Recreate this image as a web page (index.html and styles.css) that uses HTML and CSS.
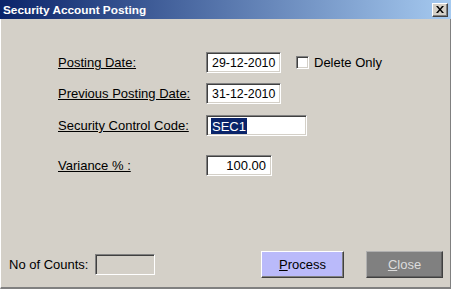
FILE: index.html
```html
<!DOCTYPE html>
<html lang="en">
<head>
    <meta charset="UTF-8">
    <title>Security Account Posting</title>
    <link rel="stylesheet" href="styles.css">
</head>
<body>
    <div class="window">
        <!-- Caption bar -->
        <div class="titlebar">
            <span class="title">Security Account Posting</span>
            <div class="caption-btn">
                <svg width="8" height="7" viewBox="0 0 8 7">
                    <path d="M0 0h2l2 2.5L6 0h2L5 3.5 8 7H6L4 4.5 2 7H0l3-3.5z" fill="#000"/>
                </svg>
            </div>
        </div>

        <div class="content">
            <div class="form">
                <div class="row">
                    <span class="field-label">Posting Date:</span>
                    <span class="textbox date">29-12-2010</span>
                    <span class="checkbox"></span>
                    <span class="check-label">Delete Only</span>
                </div>
                <div class="row">
                    <span class="field-label">Previous Posting Date:</span>
                    <span class="textbox date">31-12-2010</span>
                </div>
                <div class="row row-code">
                    <span class="field-label">Security Control Code:</span>
                    <span class="textbox code"><span class="selected">SEC1</span></span>
                </div>
                <div class="row row-variance">
                    <span class="field-label">Variance % :</span>
                    <span class="textbox number">100.00</span>
                </div>
            </div>

            <div class="footer">
                <span class="count-label">No of Counts:</span>
                <span class="textbox disabled"></span>
                <div class="buttons">
                    <div class="btn btn-process"><u>P</u>rocess</div>
                    <div class="btn btn-close"><u>C</u>lose</div>
                </div>
            </div>
        </div>
    </div>
</body>
</html>
```

FILE: styles.css
```css
body {
    margin: 0;
    font-family: 'Liberation Sans', Arial, sans-serif;
    font-size: 13px;
    color: #000;
    background: #d4d0c8;
}

.window {
    width: 451px;
    height: 289px;
    display: flex;
    flex-direction: column;
    background: #d4d0c8;
    box-sizing: border-box;
}

.titlebar {
    height: 19px;
    display: flex;
    align-items: center;
    justify-content: space-between;
    padding: 0 3px 0 3px;
    background: linear-gradient(90deg, #0a246a, #a6caf0);
}

.title {
    color: #fff;
    font-weight: bold;
    font-size: 11.8px;
}

.caption-btn {
    width: 16px;
    height: 14px;
    box-sizing: border-box;
    display: flex;
    align-items: center;
    justify-content: center;
    background: #d4d0c8;
    border-top: 1px solid #fff;
    border-left: 1px solid #fff;
    border-right: 1px solid #404040;
    border-bottom: 1px solid #404040;
    box-shadow: inset -1px -1px #808080;
}

.content {
    flex: 1;
    display: flex;
    flex-direction: column;
    border-left: 1px solid #fff;
    border-right: 1px solid #808080;
    border-bottom: 2px solid #808080;
    box-shadow: inset 1px 0 #d4d0c8, 1px 0 #404040;
}

.form {
    display: flex;
    flex-direction: column;
    padding: 33px 0 0 57px;
}

.row {
    display: flex;
    align-items: center;
    height: 21px;
    margin-bottom: 10px;
}

.row-code {
    margin-top: 1px;
}

.row-variance {
    margin-top: 9px;
}

.field-label {
    width: 148px;
    flex-shrink: 0;
    text-decoration: underline;
}

.textbox {
    height: 21px;
    flex-shrink: 0;
    box-sizing: border-box;
    display: flex;
    align-items: center;
    padding: 0 5px;
    white-space: nowrap;
    background: #fff;
    border-top: 1px solid #808080;
    border-left: 1px solid #808080;
    border-right: 1px solid #fff;
    border-bottom: 1px solid #fff;
    box-shadow: inset 1px 1px #404040, inset -1px -1px #d4d0c8;
}

.date {
    width: 75px;
    padding: 0 0 0 5px;
    font-size: 12.4px;
}

.code {
    width: 101px;
    padding-left: 4px;
}

.selected {
    background: #0a246a;
    color: #fff;
    padding: 1px 1px 0 1px;
}

.number {
    width: 66px;
    justify-content: flex-end;
}

.checkbox {
    width: 13px;
    height: 13px;
    margin-left: 15px;
    box-sizing: border-box;
    background: #fff;
    border-top: 1px solid #808080;
    border-left: 1px solid #808080;
    border-right: 1px solid #fff;
    border-bottom: 1px solid #fff;
    box-shadow: inset 1px 1px #404040, inset -1px -1px #d4d0c8;
}

.check-label {
    margin-left: 5px;
}

.footer {
    margin-top: auto;
    display: flex;
    align-items: center;
    padding: 0 7px 9px 8px;
}

.count-label {
    margin-right: 6px;
}

.disabled {
    width: 60px;
    background: #d4d0c8;
}

.buttons {
    margin-left: auto;
    display: flex;
    gap: 22px;
}

.btn {
    height: 27px;
    box-sizing: border-box;
    display: flex;
    align-items: center;
    justify-content: center;
    border-top: 1px solid #fff;
    border-left: 1px solid #fff;
    border-right: 1px solid #404040;
    border-bottom: 1px solid #404040;
    box-shadow: inset -1px -1px #808080;
}

.btn-process {
    width: 83px;
    background: #babafa;
}

.btn-close {
    width: 77px;
    background: #808080;
    color: #dcdcdc;
    border-top-color: #b0b0b0;
    border-left-color: #b0b0b0;
    box-shadow: inset -1px -1px #606060;
}
```
